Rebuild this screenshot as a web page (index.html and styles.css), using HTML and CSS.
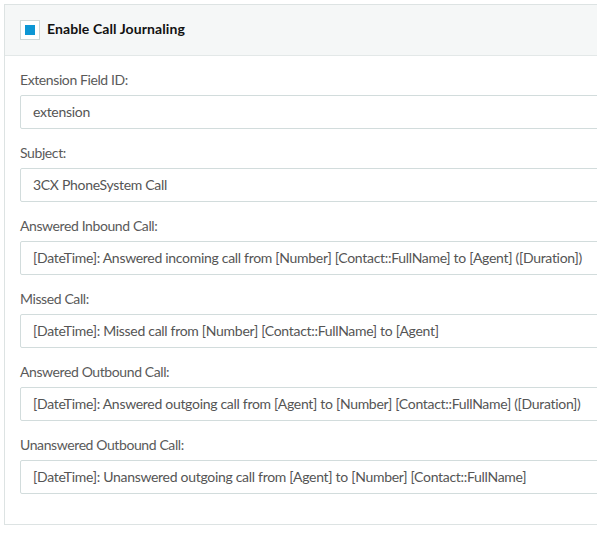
FILE: index.html
```html
<!DOCTYPE html>
<html>
<head>
<meta charset="utf-8">
<link rel="stylesheet" href="styles.css">
</head>
<body>
<div class="panel">
  <div class="panel-head">
    <span class="check"><span class="check-mark"></span></span>
    <span class="head-title">Enable Call Journaling</span>
  </div>
  <div class="panel-body">
    <div class="field">
      <div class="label">Extension Field ID:</div>
      <div class="input">extension</div>
    </div>
    <div class="field">
      <div class="label">Subject:</div>
      <div class="input">3CX PhoneSystem Call</div>
    </div>
    <div class="field">
      <div class="label">Answered Inbound Call:</div>
      <div class="input">[DateTime]: Answered incoming call from [Number] [Contact::FullName] to [Agent] ([Duration])</div>
    </div>
    <div class="field">
      <div class="label">Missed Call:</div>
      <div class="input">[DateTime]: Missed call from [Number] [Contact::FullName] to [Agent]</div>
    </div>
    <div class="field">
      <div class="label">Answered Outbound Call:</div>
      <div class="input">[DateTime]: Answered outgoing call from [Agent] to [Number] [Contact::FullName] ([Duration])</div>
    </div>
    <div class="field">
      <div class="label">Unanswered Outbound Call:</div>
      <div class="input">[DateTime]: Unanswered outgoing call from [Agent] to [Number] [Contact::FullName]</div>
    </div>
  </div>
</div>
</body>
</html>
```
FILE: styles.css
```css
html, body {
  margin: 0;
  padding: 0;
  background: #ffffff;
  overflow: hidden;
}
body {
  padding: 4px 0 0 4px;
  font-family: Lato, "Liberation Sans", sans-serif;
  font-size: 14px;
  color: #555555;
}
.panel {
  width: 620px;
  border: 1px solid #dde3e3;
  box-sizing: border-box;
}
.panel-head {
  height: 51px;
  box-sizing: border-box;
  background: #f5f7f7;
  border-bottom: 1px solid #e3e8e8;
  display: flex;
  align-items: center;
  padding-left: 15px;
}
.check {
  width: 20px;
  height: 20px;
  box-sizing: border-box;
  border: 1px solid #cdd7d7;
  background: #ffffff;
  display: flex;
  align-items: center;
  justify-content: center;
}
.check-mark {
  width: 10px;
  height: 10px;
  background: #0d96d4;
}
.head-title {
  margin-left: 7px;
  padding-bottom: 3px;
  font-weight: bold;
  color: #111111;
  letter-spacing: 0.1px;
}
.panel-body {
  padding: 13px 15px 30px 15px;
  display: flex;
  flex-direction: column;
  gap: 13px;
}
.field {
  display: flex;
  flex-direction: column;
}
.label {
  height: 21px;
  line-height: 21px;
  margin-bottom: 5px;
  letter-spacing: -0.4px;
  color: #5a5a5a;
}
.input {
  height: 34px;
  box-sizing: border-box;
  border: 1px solid #d2dcdc;
  border-radius: 2px;
  padding: 0 12px;
  line-height: 32px;
  white-space: nowrap;
  overflow: hidden;
  letter-spacing: -0.3px;
  color: #555555;
}
```
